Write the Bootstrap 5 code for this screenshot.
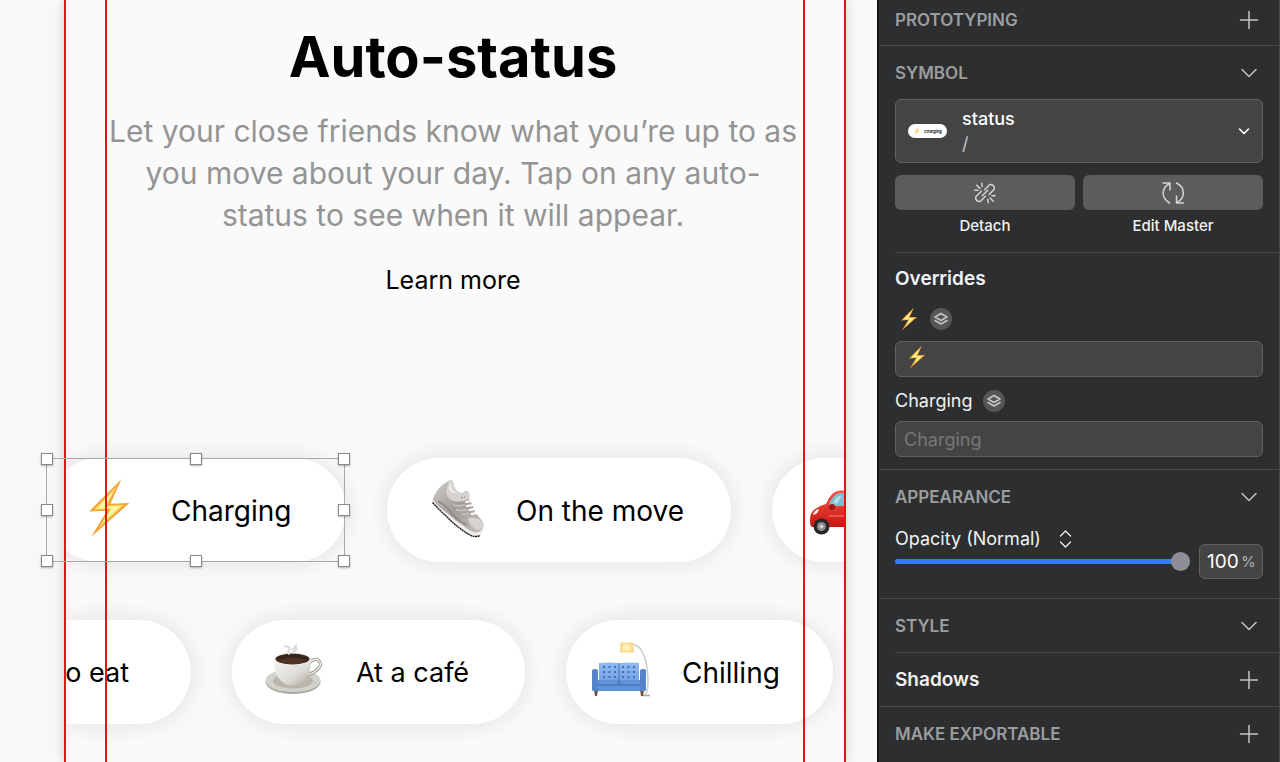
<!DOCTYPE html>
<html lang="en">
<head>
<meta charset="utf-8">
<meta name="viewport" content="width=device-width, initial-scale=1">
<title>Auto-status</title>
<link href="https://cdn.jsdelivr.net/npm/bootstrap@5.3.0/dist/css/bootstrap.min.css" rel="stylesheet">
<style>
body{font-family:Inter,"Liberation Sans",sans-serif;background:#f8f8f8;color:#000}
.canvas-area{padding:0 31px 0 64px;min-width:0}
.artboard{background:#fafafa;box-shadow:0 0 10px rgba(0,0,0,.16);padding-top:22px;min-width:0}
.guides{inset:0;border:solid #e81216;border-width:0 2px;padding:0 39px;pointer-events:none;z-index:3}
.guides div{border:solid #e81216;border-width:0 2px}
.artboard h1{font-size:56px;line-height:70px;font-weight:700;margin-bottom:18px}
.intro{font-size:30px;line-height:42px;color:#949494;margin-bottom:29px}
.more{font-size:25px;line-height:30px;color:#000}
.pill-rows{margin-top:163px;gap:58px}
.pill-clip{overflow:hidden;padding:32px 0;margin:-32px 0;gap:41px}
.clip-a .pill:first-child{margin-left:-17px}
.pill{height:104px;border-radius:52px;background:#fff;box-shadow:0 0 26px rgba(0,0,0,.11);font-size:28px;line-height:34px;gap:32px;padding:2px 0 0 32px;flex:none;white-space:nowrap}
.pill svg{width:60px;height:60px;flex:none;overflow:visible}
.w-charging{width:299px}
.w-move{width:344px;padding-left:41px;gap:28px}
.w-car{width:299px}
.w-eat{width:127px;justify-content:flex-end;padding-right:62px;border-radius:0 52px 52px 0;font-size:27px}
.w-cafe{width:293px;font-size:27px}
.w-chill{width:267px;padding-left:25px;gap:31px}
.selection{left:-18px;top:0;width:299px;height:104px;border:1px solid #aaa;z-index:4}
.handle{width:12px;height:12px;background:#fff;border:1px solid #888;box-shadow:0 1px 2px rgba(0,0,0,.3);transform:translate(-50%,-50%)}

.inspector{width:403px;flex:none;background:#2d2e30;color:#f2f2f2;border-left:2px solid #121314;border-right:1px solid #47484a;font-size:18px;line-height:24px}
.inspector section{border-bottom:1px solid #4a4b4d;padding:0 16px}
.inspector section:last-child{border-bottom:0}
.sec-head{height:53px}
.sec-first .sec-head{height:45px;padding-bottom:6px}
.sec-head h2{font-size:17px;line-height:24px;font-weight:600;color:#9c9d9f;margin:0}
.sub-title{font-size:19px;line-height:24px;font-weight:600;margin:0}
.bare{background:none;border:0;padding:0;color:#c4c4c6;line-height:0;width:28px}
.stroke-ico{fill:none;stroke:currentColor;stroke-linecap:round;stroke-linejoin:round}
.well{background:#444;border:1px solid #606161;border-radius:6px;color:#fff}
.picker{height:64px;padding:0 12px;text-align:left}
.picker-text{font-size:18px;line-height:25px;margin-left:15px}
.picker-text b{font-weight:500}
.picker-text i{font-style:normal;color:#c4c4c4}
.tool{height:35px;background:#5b5c5e;border:0;border-radius:6px;color:#d4d4d6;padding:0;line-height:0}
.tool-label{font-size:15px;line-height:20px;font-weight:500;margin-top:6px}
.inset-line{height:1px;background:#4a4b4d;margin-right:-16px}
.sec-symbol{padding-bottom:12px!important}
.sec-symbol .sub-title{margin-top:14px}
.icon-row{padding-top:16px;margin-bottom:10px}
.field-block{margin-bottom:12px}
.field{height:36px;width:100%;font-size:18px;padding:0 8px;outline:0}
.field::placeholder{color:#777;opacity:1}
.chip{width:22px;height:22px;background:#555658;border-radius:50%;color:#c6c6c8;margin-left:11px}
.over-bolt{left:11px;top:4px}
.sec-opacity{padding-bottom:19px!important}
.blend{appearance:none;background:none;border:0;color:#f2f2f2;padding:0;font-size:18px;line-height:24px;width:162px;outline:0}
.blend option{color:#000}
.range{appearance:none;height:20px;width:295px;background:none;margin:0;display:block}
.range::-webkit-slider-runnable-track{height:5px;border-radius:3px;background:#347df6}
.range::-webkit-slider-thumb{appearance:none;width:19px;height:19px;border-radius:50%;background:#8e8f96;border:0;margin-top:-7px}
.percent{width:64px;height:35px;padding:0 7px;margin-top:21px}
.percent input{width:34px;background:none;border:0;padding:0;color:#fff;font-size:19px;outline:0}
.percent span{font-size:15px;color:#b4b4b4}
</style>
</head>
<body>
<svg width="0" height="0" class="position-absolute" aria-hidden="true">
  <defs>
    <linearGradient id="red" x1="0" y1="0" x2="0" y2="1"><stop offset="0" stop-color="#f4584a"/><stop offset="1" stop-color="#c9150f"/></linearGradient>
    <linearGradient id="cup" x1="0" y1="0" x2="1" y2="1"><stop offset="0" stop-color="#f6f5f1"/><stop offset=".6" stop-color="#dddbd5"/><stop offset="1" stop-color="#a5a29a"/></linearGradient>
    <linearGradient id="sofa" x1="0" y1="0" x2="0" y2="1"><stop offset="0" stop-color="#90bbf3"/><stop offset="1" stop-color="#6999dd"/></linearGradient>
    <linearGradient id="shoe" x1="0" y1="0" x2="1" y2="1"><stop offset="0" stop-color="#cfccca"/><stop offset=".5" stop-color="#a19c99"/><stop offset="1" stop-color="#c4c1be"/></linearGradient>
    <symbol id="bolt" viewBox="0 0 42 60">
      <path d="M33.500 1 1 33.500l18-.8L3 59 41.500 25l-19 .8z" fill="#f5a33b"/>
      <path d="M28.500 8.500 6.500 31.500l16-.6L11 49.500 35.500 27l-17 .8z" fill="#ffe873"/>
      <path d="M26 13 10.500 30l14.500-.5L16 43l15-14.500-15 .5z" fill="#fff6ad"/>
    </symbol>
    <symbol id="layers" viewBox="0 0 22 22"><path d="M11 5.500 17 9l-6 3.500L5 9zM5 12.500l6 3.500 6-3.500" fill="none" stroke="currentColor" stroke-width="1.500" stroke-linejoin="round" stroke-linecap="round"/></symbol>
    <symbol id="plus" viewBox="0 0 20 20"><path d="M10 1.500v17M1.500 10h17" stroke="currentColor" stroke-width="1.500" stroke-linecap="round"/></symbol>
    <symbol id="chev" viewBox="0 0 20 20"><path d="M3 6.500 10 13.500 17 6.500" fill="none" stroke="currentColor" stroke-width="1.500" stroke-linecap="round" stroke-linejoin="round"/></symbol>
  </defs>
</svg>

<div class="d-flex vh-100 overflow-hidden">
  <main class="canvas-area flex-grow-1 d-flex">
    <div class="artboard position-relative flex-grow-1">
      <div class="text-center pe-1">
        <h1>Auto-status</h1>
        <p class="intro">Let your close friends know what you’re up to as<br>you move about your day. Tap on any auto-<br>status to see when it will appear.</p>
        <a href="#" class="more d-block text-decoration-none">Learn more</a>
      </div>

      <div class="pill-rows d-flex flex-column">
        <div class="position-relative">
          <div class="pill-clip clip-a d-flex">
            <div class="pill w-charging d-flex align-items-center">
              <svg viewBox="0 0 60 60" aria-hidden="true"><use href="#bolt" x="9" y="-3" width="42" height="60"/></svg>
              <span>Charging</span>
            </div>
            <div class="pill w-move d-flex align-items-center">
              <svg viewBox="0 0 60 60" aria-hidden="true">
                <path d="M4.500 19Q4 22 5.500 24 12 30 19 36.500 30 47 42 54.500q5 2.500 10 .5l3-5.500-2-5-47-27z" fill="#efeeec"/>
                <path d="M4.500 21.500Q12 29.500 19 36 30 47 41 53.500q6 3.500 11 1" fill="none" stroke="#1c1c1c" stroke-width="1.400" stroke-dasharray="2 .5"/>
                <path d="M4.700 18.500Q7 11 14 4L21-.2q3-1.300 4 .7.500 5 2.500 8 3 4 7 3.500L37 10q3-.5 4 2 .8 3-.3 6l3.800 6L47 31l6.500 8q2.800 4 1.800 8-2 4-7 4.500-6-.5-12-6-9-5.500-17-13.500Q9 25 4.700 18.500z" fill="url(#shoe)"/>
                <path d="M21-.2q3-1.300 4 .7.500 5 2.500 8 3 4 7 3.500L37 10q3-.5 4 2 .8 3-.3 6-7 4-15 2-6-2-7.700-8Q19 5 21-.2z" fill="#d5d2cf"/>
                <path d="M22.500 1Q22 8 29 12.500q-6 0-8.500-5z" fill="#efedeb"/>
                <path d="M40 37q7-1 12 1.500 3.500 4 3 8.500-2 2-6 1.500-7-2-9-11.500z" fill="#d6d3d0"/>
                <path d="M10 20q8 4 14 13 8 8 15 11" fill="none" stroke="#8d8885" stroke-width="1.500"/>
                <path d="M25 24q6 1.500 12 0M28 28.500q6 2 11 0M34 33q4 1 7-1" stroke="#c9c5c2" stroke-width="1.500" fill="none"/>
                <path d="m38 21 5.500-1M39 25l6-1M41.500 29l5-1M43.500 33l5-1" stroke="#fff" stroke-width="1.800" stroke-linecap="round"/>
                <path d="M33 16.500h1.500M36 16h1" stroke="#777" stroke-width="1.200"/>
              </svg>
              <span>On the move</span>
            </div>
            <div class="pill w-car d-flex align-items-center">
              <svg viewBox="0 0 60 60" aria-label="Car" role="img">
                <path d="M6 40q0-9 5-12 6-4 11-5Q27 10 36 9.500h14Q60 13 62 24v22H8q-2-1-2-6z" fill="url(#red)"/>
                <path d="M25 23q4-10 11-11h6v13H26z" fill="#82bdcb"/><path d="M29 22q3-7 9-8l-5 9z" fill="#b5dce3"/>
                <path d="M44 12h7q7 4 9 12H44z" fill="#5d98a8"/>
                <path d="M9 34q1-5 6-6-1 5-6 6z" fill="#fff3e8"/>
                <ellipse cx="28" cy="26" rx="3" ry="3" fill="#a51613"/><path d="M25 35h35" stroke="#ef8377" stroke-width="1"/>
                <circle cx="17.500" cy="45.500" r="8" fill="#272727"/><circle cx="17.500" cy="45.500" r="4.500" fill="#8b8b8b"/><circle cx="17.500" cy="45.500" r="2" fill="#ccc"/>
              </svg>
            </div>
          </div>
          <div class="selection position-absolute" aria-hidden="true">
            <div class="handle position-absolute top-0 start-0"></div><div class="handle position-absolute top-0 start-50"></div><div class="handle position-absolute top-0 start-100"></div>
            <div class="handle position-absolute top-50 start-0"></div><div class="handle position-absolute top-50 start-100"></div>
            <div class="handle position-absolute top-100 start-0"></div><div class="handle position-absolute top-100 start-50"></div><div class="handle position-absolute top-100 start-100"></div>
          </div>
        </div>

        <div class="pill-clip d-flex">
          <div class="pill w-eat d-flex align-items-center"><span>o eat</span></div>
          <div class="pill w-cafe d-flex align-items-center">
            <svg viewBox="0 0 60 60" aria-hidden="true">
              <g transform="translate(0 2)">
              <ellipse cx="29" cy="37" rx="27.500" ry="12" fill="#aaa79f"/><ellipse cx="29" cy="35.500" rx="27.500" ry="11.500" fill="#d3d1cb"/><ellipse cx="29" cy="36" rx="20" ry="7.500" fill="#b9b6ae"/>
              <path d="M45 18q5-5 9-3 5 4 0 9-4 4-11 6" fill="none" stroke="#96938d" stroke-width="3.200"/><path d="M45 18q5-5 9-3 5 4 0 9-4 4-11 6" fill="none" stroke="#e9e7e3" stroke-width="1.600"/>
              <path d="M10 15q0 15 7 21 5 4.500 12 4.500T41 36q6-6 6-21z" fill="url(#cup)"/>
              <ellipse cx="28.500" cy="14" rx="18.500" ry="6.500" fill="#f1efeb"/><ellipse cx="28.500" cy="14" rx="17" ry="5.400" fill="#38251c"/><ellipse cx="28.500" cy="16" rx="14" ry="3" fill="#513323"/>
              <path d="M25 9q-2-4 1-5 0-2-5-3M29 8q2-4-1-4 5-1 4-4M31 6q3-2 0-4" fill="none" stroke="#dadada" stroke-width="1.800" stroke-linecap="round"/>
              </g>
            </svg>
            <span>At a café</span>
          </div>
          <div class="pill w-chill d-flex align-items-center">
            <svg viewBox="0 0 60 60" aria-hidden="true">
              <path d="M36 1q20-3 21 37 0 10-3 14" fill="none" stroke="#c9cbcd" stroke-width="1.500"/><path d="M51 52.500h8" stroke="#aaa" stroke-width="1.600"/>
              <path d="M29.500-.5h12.500l1 10h-14z" fill="#f9d88c"/><path d="M32 1.500h7l1 6h-9z" fill="#fff0b8"/>
              <path d="M3 47h4l-1 6H4zM49 47h4l-1 6h-2z" fill="#71503a"/>
              <path d="M8 20q10-1 20 0 10-1 20 0v24H8z" fill="url(#sofa)"/><path d="M28 20v20" stroke="#4474b4" stroke-width="1"/>
              <path d="M12 24h14M12 29h14M12 34h14M31 24h15M31 29h15M31 34h15" stroke="#426fac" stroke-width="1.800" stroke-dasharray="2 3.500"/>
              <path d="M7 37h42v11H7z" fill="#6092d8"/><path d="M7 42h42M28 37v5" stroke="#3b6bac" stroke-width="1"/>
              <path d="M1 28q0-2 3-2t3 2v20H2q-1 0-1-2zM49 28q0-2 3-2t3 2v18q0 2-1 2h-5z" fill="#5483c8"/>
            </svg>
            <span>Chilling</span>
          </div>
        </div>
      </div>

      <div class="guides position-absolute" aria-hidden="true"><div class="h-100"></div></div>
    </div>
  </main>

  <aside class="inspector">
    <section class="sec-first">
      <div class="sec-head d-flex align-items-center justify-content-between"><h2>PROTOTYPING</h2><button class="bare" aria-label="Add prototyping"><svg width="20" height="20"><use href="#plus"/></svg></button></div>
    </section>

    <section class="sec-symbol">
      <div class="sec-head d-flex align-items-center justify-content-between"><h2>SYMBOL</h2><button class="bare" aria-label="Collapse symbol"><svg width="20" height="20"><use href="#chev"/></svg></button></div>
      <button class="well picker w-100 d-flex align-items-center" aria-label="Symbol source: status">
        <svg width="39" height="16" viewBox="0 0 39 16" aria-hidden="true"><rect y="1" width="39" height="14" rx="7" fill="#fff"/><use href="#bolt" x="6" y="4" width="6" height="8"/><text x="16" y="10" font-size="4" font-weight="600">Charging</text></svg>
        <span class="picker-text flex-grow-1"><b>status</b><br><i>/</i></span>
        <svg width="12" height="12" viewBox="0 0 12 12" class="stroke-ico" stroke-width="1.600"><path d="m1.500 4 4.500 4.500L10.500 4"/></svg>
      </button>
      <div class="row gx-2 mt-0 pt-2 text-center">
        <div class="col pt-1">
          <button class="tool w-100" aria-labelledby="detach"><svg width="24" height="24" viewBox="0 0 26 26" class="stroke-ico" stroke-width="1.600"><path d="m12.500 9.500 5.500-5.500a4 4 0 0 1 5 5L17.500 14.500M13.500 16.500 8 22a4 4 0 0 1-5-5l6-6M10 16l6-6M4 4.500 7.500 8M9.500 2.500l.5 3.500M2 10h3.500M18.500 18.500 22 22M16 20l.5 3.500M20.500 16H24"/></svg></button>
          <div class="tool-label" id="detach">Detach</div>
        </div>
        <div class="col pt-1">
          <button class="tool w-100" aria-labelledby="editm"><svg width="26" height="26" viewBox="0 0 26 26" class="stroke-ico" stroke-width="1.500"><path d="M3 3h7v7M9.500 3.500C1 8 1 18 9.500 23M23.500 23h-7v-7M17 22.500c8.500-4.500 8.500-15-.5-19.500"/></svg></button>
          <div class="tool-label" id="editm">Edit Master</div>
        </div>
      </div>
      <div class="inset-line mt-3"></div>
      <h3 class="sub-title">Overrides</h3>
      <div class="icon-row d-flex align-items-center">
        <svg width="20" height="24" viewBox="0 0 42 60" class="ms-1" aria-hidden="true"><use href="#bolt" width="42" height="60"/></svg>
        <span class="chip"><svg width="22" height="22" class="d-block"><use href="#layers"/></svg></span>
      </div>
      <div class="field-block position-relative">
        <input class="well field d-block" aria-label="Icon override">
        <svg width="22" height="24" viewBox="0 0 42 60" class="over-bolt position-absolute" aria-hidden="true"><use href="#bolt" width="42" height="60"/></svg>
      </div>
      <div class="d-flex align-items-center mb-2">
        <label for="ov">Charging</label>
        <span class="chip"><svg width="22" height="22" class="d-block"><use href="#layers"/></svg></span>
      </div>
      <input class="well field d-block" id="ov" placeholder="Charging">
    </section>

    <section class="sec-opacity">
      <div class="sec-head d-flex align-items-center justify-content-between"><h2>APPEARANCE</h2><button class="bare" aria-label="Collapse appearance"><svg width="20" height="20"><use href="#chev"/></svg></button></div>
      <div class="d-flex justify-content-between align-items-start">
        <div class="mt-1">
          <div class="d-flex align-items-center">
            <select class="blend" aria-label="Blend mode"><option>Opacity (Normal)</option><option>Opacity (Multiply)</option></select>
            <svg width="16" height="18" viewBox="0 0 16 18" class="stroke-ico" stroke-width="1.300"><path d="m3.500 6 5-5 5 5M3.500 12l5 5 5-5"/></svg>
          </div>
          <input type="range" class="range" min="0" max="100" value="100" aria-label="Opacity">
        </div>
        <label class="well percent d-flex align-items-center justify-content-between"><input value="100" aria-label="Opacity percent"><span>%</span></label>
      </div>
    </section>

    <section>
      <div class="sec-head d-flex align-items-center justify-content-between"><h2>STYLE</h2><button class="bare" aria-label="Collapse style"><svg width="20" height="20"><use href="#chev"/></svg></button></div>
      <div class="inset-line"></div>
      <div class="sec-head d-flex align-items-center justify-content-between"><h3 class="sub-title m-0">Shadows</h3><button class="bare" aria-label="Add shadow"><svg width="20" height="20"><use href="#plus"/></svg></button></div>
    </section>

    <section>
      <div class="sec-head d-flex align-items-center justify-content-between"><h2>MAKE EXPORTABLE</h2><button class="bare" aria-label="Add export"><svg width="20" height="20"><use href="#plus"/></svg></button></div>
    </section>
  </aside>
</div>
<script src="https://cdn.jsdelivr.net/npm/bootstrap@5.3.0/dist/js/bootstrap.bundle.min.js"></script>
</body>
</html>
